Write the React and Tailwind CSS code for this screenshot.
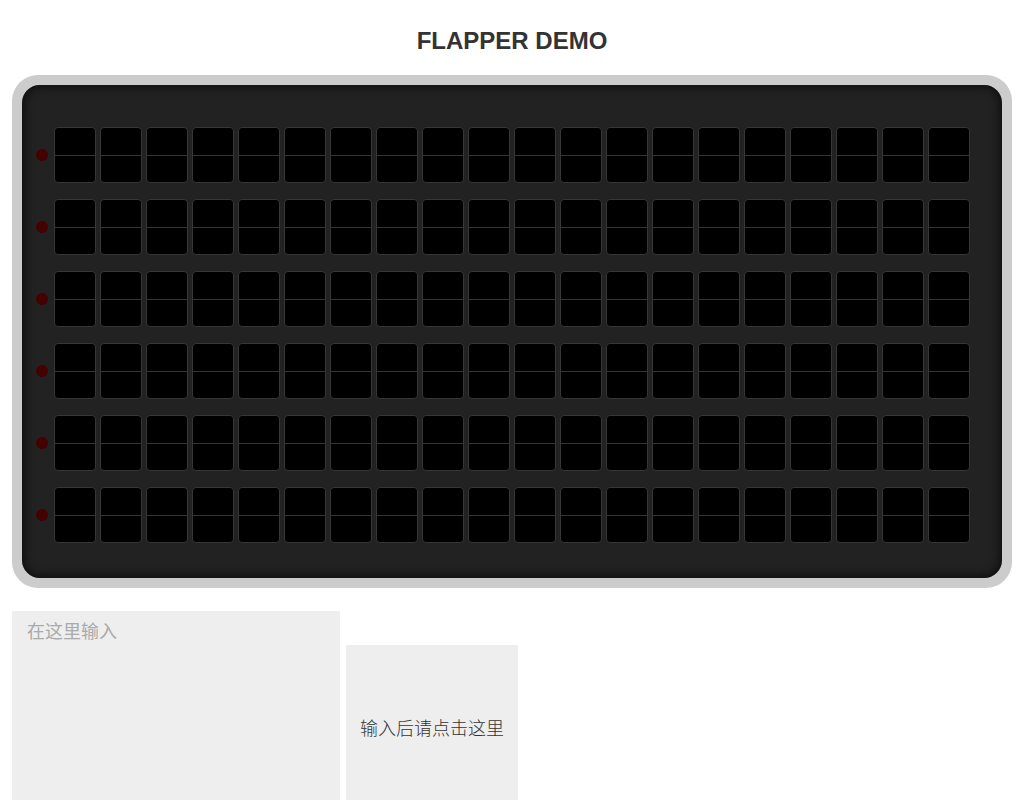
import React from 'react';

const ROWS = 6;
const COLS = 20;

const Tile = () => (
  <div className="w-[42px] h-[56px] bg-black border border-[#363636] rounded-[4px] flex flex-col">
    <div className="flex-1 border-b border-[#333]" />
    <div className="flex-1" />
  </div>
);

const FlapRow = () => (
  <div className="flex items-center">
    <div className="w-[12px] h-[12px] rounded-full bg-[#450000] mr-[6px]" />
    <div className="flex gap-[4px]">
      {Array.from({ length: COLS }).map((_, i) => (
        <Tile key={i} />
      ))}
    </div>
  </div>
);

export default function App() {
  return (
    <div className="min-h-[800px] bg-white font-['Liberation_Sans',sans-serif]">
      <h1 className="pt-[27px] text-center text-[24px] leading-[28px] font-bold text-[#333]">FLAPPER DEMO</h1>

      <div className="mt-[20px] mx-[12px] bg-[#ccc] rounded-[26px] p-[10px]">
        <div className="bg-[#222] rounded-[18px] shadow-[inset_0_0_12px_rgba(0,0,0,0.85)] pt-[42px] pb-[35px] pl-[14px] flex flex-col gap-[16px]">
          {Array.from({ length: ROWS }).map((_, i) => (
            <FlapRow key={i} />
          ))}
        </div>
      </div>

      <div className="mt-[23px] ml-[12px] flex items-end gap-[6px] h-[200px] overflow-hidden font-['Noto_Sans_CJK_SC',sans-serif]">
        <textarea
          placeholder="在这里输入"
          className="w-[328px] h-[200px] shrink-0 bg-[#eee] px-[15px] py-[7px] text-[18px] leading-[24px] text-[#333] placeholder:text-[#aaa] resize-none outline-none"
        />
        <button className="w-[172px] h-[166px] shrink-0 bg-[#eee] text-[18px] leading-[24px] text-[#333] font-light pb-[2px]">输入后请点击这里</button>
      </div>
    </div>
  );
}
